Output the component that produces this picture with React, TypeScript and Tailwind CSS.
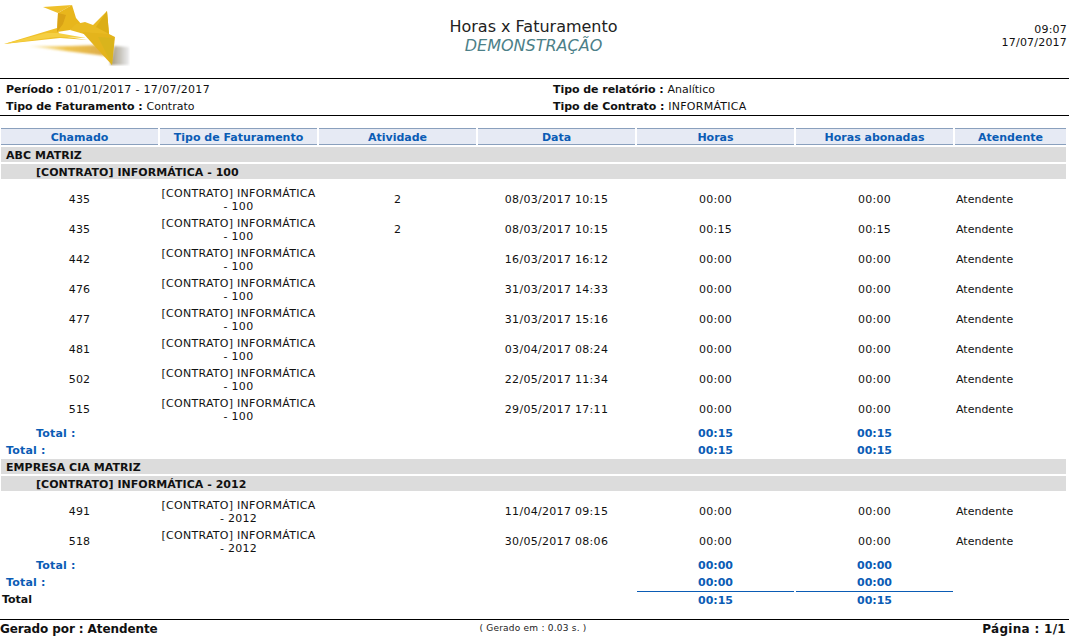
const cols = "grid grid-cols-[157px_157px_157px_157px_157px_157px_111px] gap-x-[2px]";

function Logo() {
  return (
    <svg width="130" height="66" viewBox="0 0 130 66" className="block">
      <defs>
        <linearGradient id="s" x1="0" x2="1" y1="0" y2="0">
          <stop offset="0" stopColor="#f0c840" stopOpacity="0.2" />
          <stop offset="0.5" stopColor="#ecbc3c" stopOpacity="0.9" />
          <stop offset="1" stopColor="#dca840" stopOpacity="0.95" />
        </linearGradient>
        <linearGradient id="g" x1="0" x2="1" y1="0" y2="0">
          <stop offset="0" stopColor="#8c7a50" stopOpacity="0.8" />
          <stop offset="0.6" stopColor="#a8a49a" stopOpacity="0.6" />
          <stop offset="1" stopColor="#c8c8c8" stopOpacity="0.35" />
        </linearGradient>
        <filter id="b"><feGaussianBlur stdDeviation="0.45" /></filter>
        <filter id="b2"><feGaussianBlur stdDeviation="1" /></filter>
      </defs>
      <polygon points="28,46 70,46 98,45 106,56 66,51" fill="url(#s)" filter="url(#b2)" />
      <polygon points="114,46 129,47 129,65 110,65" fill="url(#g)" filter="url(#b2)" />
      <g filter="url(#b)">
        <polygon points="4,44 57,28 60,36 88,40 60,38" fill="#efc029" />
        <polygon points="4,44 46,33 58,33 86,38 56,37" fill="#f5cf42" />
        <polygon points="43,7 72,5 58,13" fill="#efc02a" />
        <polygon points="58,13 72,5 76,18 82,25 70,30 57,32" fill="#e8b61f" />
        <polygon points="58,13 66,15 63,24 57,32" fill="#d9a216" />
        <polygon points="76,24 85,22 93,25 107,11 109,34 84,34 70,30" fill="#e9ba22" />
        <polygon points="107,11 109,34 96,27" fill="#dcae18" />
        <polygon points="82,32 109,34 115,37 112,65 100,52" fill="#e4b41e" />
        <polygon points="98,37 114,38 112,65" fill="#d9b41f" />
      </g>
    </svg>
  );
}

function Row({ id, data, h1, h2, who = "Atendente", act, tipo }: { id: string; data: string; h1: string; h2: string; who?: string; act?: string; tipo: string }) {
  return (
    <div className={`${cols} h-[30px] items-center text-[#111]`}>
      <div className="text-center tracking-[0.1px]">{id}</div>
      <div className="text-center leading-[13px] tracking-[0.27px]">[CONTRATO] INFORMÁTICA<br />- {tipo}</div>
      <div className="text-center">{act}</div>
      <div className="text-center tracking-[0.3px]">{data}</div>
      <div className="text-center tracking-[0.3px]">{h1}</div>
      <div className="text-center tracking-[0.3px]">{h2}</div>
      <div className="pl-[1px]">{who}</div>
    </div>
  );
}

function Group({ children, indent }: { children: string; indent?: boolean }) {
  return (
    <div className={`h-[15px] w-[1065px] bg-[#dcdcdc] font-bold leading-[17px] tracking-[0.04px] text-[#111] ${indent ? "pl-[35px]" : "pl-[5px]"}`}>{children}</div>
  );
}

function TotalRow({ label, a, b, indent }: { label: string; a: string; b: string; indent?: boolean }) {
  return (
    <div className={`${cols} h-[17px] items-center font-bold text-[#0b5cb5]`}>
      <div className={`whitespace-nowrap tracking-[0.2px] ${indent ? "pl-[35px]" : "pl-[5px]"}`}>{label}</div>
      <div /><div /><div />
      <div className="text-center">{a}</div>
      <div className="text-center">{b}</div>
      <div />
    </div>
  );
}

const heads = ["Chamado", "Tipo de Faturamento", "Atividade", "Data", "Horas", "Horas abonadas", "Atendente"];
const first = [
  ["435", "08/03/2017 10:15", "00:00", "00:00", "2"],
  ["435", "08/03/2017 10:15", "00:15", "00:15", "2"],
  ["442", "16/03/2017 16:12", "00:00", "00:00", ""],
  ["476", "31/03/2017 14:33", "00:00", "00:00", ""],
  ["477", "31/03/2017 15:16", "00:00", "00:00", ""],
  ["481", "03/04/2017 08:24", "00:00", "00:00", ""],
  ["502", "22/05/2017 11:34", "00:00", "00:00", ""],
  ["515", "29/05/2017 17:11", "00:00", "00:00", ""],
];

const label = "font-bold tracking-[-0.05px]";

export default function App() {
  return (
    <div className="w-[1069px] h-[644px] overflow-hidden bg-white text-[11px] text-[#111] font-['DejaVu_Sans',Verdana,sans-serif]">
      <div className="relative h-[78px] flex">
        <div className="w-[130px] shrink-0"><Logo /></div>
        <div className="flex-1 text-center pt-[17px] pr-[62px]">
          <div className="text-[16px] leading-[20px] text-[#222]">Horas x Faturamento</div>
          <div className="text-[16px] leading-[18px] italic text-[#4c8088]">DEMONSTRAÇÃO</div>
        </div>
        <div className="w-[70px] pt-[23px] pr-[2px] text-right leading-[13px] tracking-[0.2px]">09:07<br />17/07/2017</div>
      </div>
      <div className="border-t border-b border-black h-[38px] pt-[2px] flex leading-[17px]">
        <div className="w-[553px] pl-[6px]">
          <div><span className={label}>Período : </span><span className="tracking-[0.3px]">01/01/2017 - 17/07/2017</span></div>
          <div><span className={label}>Tipo de Faturamento : </span>Contrato</div>
        </div>
        <div>
          <div><span className={label}>Tipo de relatório : </span>Analítico</div>
          <div><span className={label}>Tipo de Contrato : </span><span className="tracking-[0.27px]">INFORMÁTICA</span></div>
        </div>
      </div>
      <div className="pl-[1px] pt-[12px]">
        <div className={`${cols} mb-[2px]`}>
          {heads.map((h) => (
            <div key={h} className="h-[17px] bg-[#e6eaf4] border-y border-[#8aa0bd] text-center font-bold text-[#0b5cb5] leading-[17px]">{h}</div>
          ))}
        </div>
        <div className="flex flex-col gap-[2px]">
          <Group>ABC MATRIZ</Group>
          <Group indent>[CONTRATO] INFORMÁTICA - 100</Group>
        </div>
        <div className="mt-[6px]">
          {first.map((r, i) => (
            <Row key={i} id={r[0]} data={r[1]} h1={r[2]} h2={r[3]} act={r[4]} tipo="100" />
          ))}
        </div>
        <div className="mt-[1px]">
          <TotalRow label="Total :" a="00:15" b="00:15" indent />
          <TotalRow label="Total :" a="00:15" b="00:15" />
        </div>
        <div className="flex flex-col gap-[2px] -mt-[1px]">
          <Group>EMPRESA CIA MATRIZ</Group>
          <Group indent>[CONTRATO] INFORMÁTICA - 2012</Group>
        </div>
        <div className="mt-[6px]">
          <Row id="491" data="11/04/2017 09:15" h1="00:00" h2="00:00" tipo="2012" />
          <Row id="518" data="30/05/2017 08:06" h1="00:00" h2="00:00" tipo="2012" />
        </div>
        <div className="mt-[1px]">
          <TotalRow label="Total :" a="00:00" b="00:00" indent />
          <TotalRow label="Total :" a="00:00" b="00:00" />
        </div>
        <div className={`${cols} h-[19px] -mt-[1px] font-bold`}>
          <div className="-ml-[1px] pl-[2px] leading-[17px]">Total</div>
          <div /><div /><div />
          <div className="border-t border-[#0b5cb5] text-center text-[#0b5cb5] leading-[17px]">00:15</div>
          <div className="border-t border-[#0b5cb5] text-center text-[#0b5cb5] leading-[17px]">00:15</div>
          <div />
        </div>
      </div>
      <div className="mt-[9px] border-t border-black flex items-center justify-between h-[18px] pr-[3px] font-bold text-[12px] text-[#111]">
        <div className="w-[320px] tracking-[-0.1px]">Gerado por : Atendente</div>
        <div className="font-normal text-[9px] text-[#222] tracking-[0.22px]">( Gerado em : 0.03 s. )</div>
        <div className="w-[320px] text-right tracking-[0.3px]">Página : 1/1</div>
      </div>
    </div>
  );
}
